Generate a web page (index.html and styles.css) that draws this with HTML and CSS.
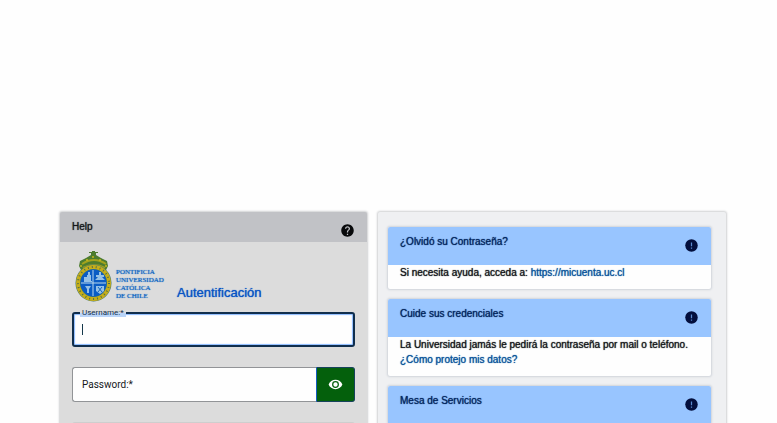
FILE: index.html
```html
<!DOCTYPE html>
<html lang="es">
<head>
    <meta charset="UTF-8">
    <meta name="viewport" content="width=device-width, initial-scale=1.0">
    <title>Autentificación</title>
    <link rel="stylesheet" href="styles.css">
</head>
<body>
<svg class="icon-defs" aria-hidden="true">
    <symbol id="icon-alert" viewBox="0 0 24 24">
        <path fill="currentColor" d="M12 2a10 10 0 1 0 0 20 10 10 0 0 0 0-20z"/>
        <path fill="#5b8bd0" d="M11 7h2v6h-2zM11 15h2v2h-2z"/>
    </symbol>
</svg>
<main class="container">
    <section class="login-card">
        <header class="login-header">
            <span>Help</span>
            <svg class="icon help-icon" viewBox="0 0 24 24" role="img" aria-label="Help"><path fill="currentColor" d="M12 2C6.48 2 2 6.48 2 12s4.48 10 10 10 10-4.48 10-10S17.52 2 12 2zm1 17h-2v-2h2v2zm2.07-7.75-.9.92C13.45 12.9 13 13.5 13 15h-2v-.5c0-1.1.45-2.1 1.17-2.83l1.24-1.26c.37-.36.59-.86.59-1.41 0-1.1-.9-2-2-2s-2 .9-2 2H8c0-2.21 1.79-4 4-4s4 1.79 4 4c0 .88-.36 1.68-.93 2.25z"/></svg>
        </header>
        <div class="login-body">
            <div class="brand">
                <svg class="crest" viewBox="0 0 38 52" aria-hidden="true">
                    <path d="M4 15 5 10l6-3 5-3V2h-2V1h3V0h3v1h3v1h-2v2l5 3 6 3 1 5-3 6H7z" fill="#4d7c2f"/>
                    <path d="M7 13q12-8 24 0M8 17q11-6 22 0" fill="none" stroke="#a3a31c" stroke-width="2"/>
                    <g fill="#c9b81c"><circle cx="12" cy="9" r="1"/><circle cx="18" cy="6" r="1"/><circle cx="25" cy="9" r="1"/><circle cx="6" cy="15" r="1"/><circle cx="31" cy="15" r="1"/></g>
                    <ellipse cx="18.500" cy="32" rx="18" ry="18.500" fill="#39737b"/>
                    <ellipse cx="18.500" cy="32" rx="15.500" ry="16" fill="none" stroke="#c6ae19" stroke-width="4"/>
                    <ellipse cx="18.500" cy="32" rx="15.500" ry="16" fill="none" stroke="#526f48" stroke-width="2" stroke-dasharray="1 3"/>
                    <ellipse cx="18.500" cy="32" rx="13" ry="13.500" fill="#0b5cc4"/>
                    <path d="M18 19v26M6 32h25" stroke="#b8d7ed" stroke-width="1"/>
                    <g fill="#96c1e6">
                        <path d="M9 26h3v-2h4v6H9zM13 21h2v3h-2zM9 30h8v1H9z"/>
                        <path d="M24 21h2v3h3v2h-2l3 3H20l3-3h-2v-2h3z"/>
                        <path d="M10 35h6l-2 3v4h-2v-4zM21 35h8v5l-4 3-4-3z"/>
                    </g>
                    <path d="m23 36 4 5m0-5-4 5" stroke="#1264c0"/>
                </svg>
                <div class="brand-name">PONTIFICIA<br>UNIVERSIDAD<br>CATÓLICA<br>DE CHILE</div>
                <h1>Autentificación</h1>
            </div>
            <form class="login-form">
                <div class="field field-active">
                    <label for="username">Username:*</label>
                    <input type="text" id="username" name="username" required>
                    <span class="caret"></span>
                </div>
                <div class="field password-field">
                    <label for="password">Password:*</label>
                    <input type="password" id="password" name="password" required>
                    <button type="button" class="reveal" aria-label="Password">
                        <svg class="icon" viewBox="0 0 24 24" aria-hidden="true"><path fill="currentColor" d="M12 4.500C7 4.500 2.730 7.610 1 12c1.730 4.390 6 7.500 11 7.500s9.270-3.110 11-7.500c-1.730-4.390-6-7.500-11-7.500zm0 13a5.500 5.500 0 1 1 0-11 5.500 5.500 0 0 1 0 11zm0-9a3.500 3.500 0 1 0 0 7 3.500 3.500 0 0 0 0-7z"/></svg>
                    </button>
                </div>
                <div class="form-actions"></div>
            </form>
        </div>
    </section>

    <aside class="info-panel">
        <section class="info-card">
            <header><h2>¿Olvidó su Contraseña?</h2><svg class="icon"><use href="#icon-alert"/></svg></header>
            <p>Si necesita ayuda, acceda a: <a href="https://micuenta.uc.cl">https://micuenta.uc.cl</a></p>
        </section>
        <section class="info-card">
            <header><h2>Cuide sus credenciales</h2><svg class="icon"><use href="#icon-alert"/></svg></header>
            <p>La Universidad jamás le pedirá la contraseña por mail o teléfono.<br><a href="#">¿Cómo protejo mis datos?</a></p>
        </section>
        <section class="info-card">
            <header><h2>Mesa de Servicios</h2><svg class="icon"><use href="#icon-alert"/></svg></header>
        </section>
    </aside>
</main>
</body>
</html>
```
FILE: styles.css
```css
* {
    box-sizing: border-box;
}
body {
    margin: 0;
    height: 100vh;
    overflow: hidden;
    background: #fefefe;
    color: #15171a;
    font-family: "Liberation Sans", Arial, sans-serif;
    font-size: 10px;
    line-height: 15px;
}
.icon-defs {
    display: none;
}
.container {
    display: grid;
    grid-template-columns: 307fr 348fr;
    gap: 11px;
    padding: 212px 51px 0 60px;
}
.login-card,
.info-panel {
    border-radius: 2px;
    box-shadow: 0 0 2px 1px #d0d1d3;
}
.login-card {
    background: #dcdcdc;
}
.login-header {
    display: flex;
    justify-content: space-between;
    height: 30px;
    padding: 7px 12px 0;
    background: #c1c2c6;
    border-radius: 2px 2px 0 0;
    text-shadow: 0 0 1px #15171a;
}
.icon {
    display: block;
    width: 15px;
    height: 15px;
}
.help-icon {
    margin-top: 4px;
    color: #08090b;
}
.login-body {
    padding: 9px 12px 30px;
}
.brand {
    display: flex;
    align-items: flex-end;
    padding-left: 3px;
}
.crest {
    width: 38px;
    height: 52px;
}
.brand-name {
    padding: 0 0 3px 3px;
    width: 64px;
    color: #0f66c4;
    font-family: "Liberation Serif", "Times New Roman", serif;
    font-size: 7px;
    line-height: 8px;
    text-shadow: 0 0 1px #0f66c4;
}
h1 {
    margin: 0;
    padding-bottom: 1px;
    color: #0854c5;
    font-size: 13px;
    font-weight: normal;
    line-height: 19px;
    text-shadow: 0 0 1px #0854c5;
}
.login-form {
    display: grid;
    gap: 20px;
    margin-top: 9px;
}
.field {
    position: relative;
    height: 35px;
}
.field input {
    display: block;
    width: 100%;
    height: 100%;
    padding: 0 10px;
    border: 1px solid #929497;
    border-radius: 3px;
    outline: none;
    background: #fefefe;
    font: inherit;
}
.field label {
    position: absolute;
    left: 10px;
    top: 10px;
    font-family: Roboto, sans-serif;
}
.field-active input {
    border: 2px solid #102e4d;
    box-shadow: inset 0 0 1px 1px #8abaff;
}
.field-active label {
    top: -3px;
    left: 8px;
    padding: 0 2px;
    background: linear-gradient(#dcdcdc 50%, #b9d4f8 50%);
    font-size: 8px;
    line-height: 8px;
    color: #102e4d;
}
.caret {
    position: absolute;
    left: 10px;
    top: 12px;
    width: 1px;
    height: 11px;
    background: #15384b;
}
.password-field {
    display: flex;
}
.password-field input {
    flex: 1;
    min-width: 0;
    border-right: 0;
    border-radius: 3px 0 0 3px;
}
.reveal {
    display: grid;
    place-items: center;
    width: 39px;
    padding: 0;
    border: 1px solid #17425c;
    border-left-color: #145cc0;
    border-radius: 0 3px 3px 0;
    background: #04600c;
    color: #fff;
}
.form-actions {
    height: 35px;
    background: #cecece;
    border-radius: 3px;
}
.info-panel {
    display: flex;
    flex-direction: column;
    gap: 10px;
    padding: 15px 15px 15px 10px;
    background: #eff0f2;
}
.info-card {
    border-radius: 2px;
    background: #fefefe;
    box-shadow: 0 0 2px 1px #d0d4da;
}
.info-card header {
    display: flex;
    justify-content: space-between;
    height: 38px;
    padding: 7px 12px 0;
    border-radius: 2px 2px 0 0;
    background: #98c5ff;
    color: #03265e;
}
.info-card .icon {
    margin-top: 4px;
    color: #030f3d;
}
h2 {
    margin: 0;
    font-size: 10px;
    font-weight: normal;
    line-height: 15px;
    text-shadow: 0 0 1px #03265e;
}
.info-card p {
    margin: 0;
    padding: 0 12px 9px;
    text-shadow: 0 0 1px currentColor;
}
.info-card a {
    color: #07539a;
    text-decoration: none;
    text-shadow: 0 0 1px #07539a;
}
```
